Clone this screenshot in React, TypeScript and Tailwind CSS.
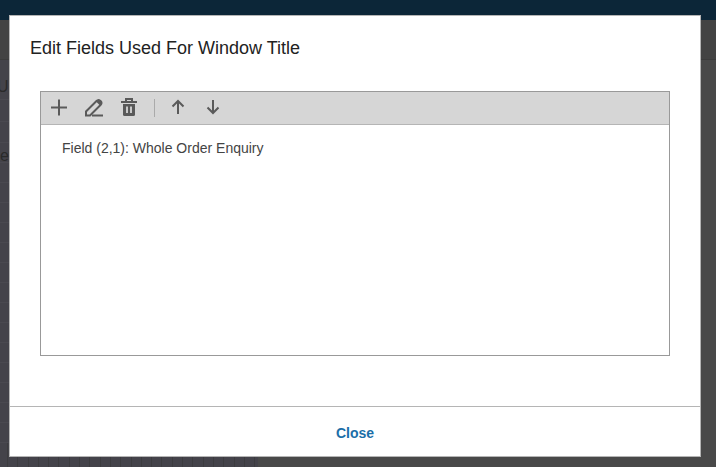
const FONT = "font-['Liberation_Sans',Arial,sans-serif]";

const ToolbarIcon = ({ children }: { children: React.ReactNode }) => (
  <svg width="24" height="24" viewBox="0 0 24 24" fill="none" stroke="#5a5a5a" strokeWidth="2" className="shrink-0">
    {children}
  </svg>
);

const plainRows = Array.from({ length: 14 }, (_, i) => i);
const calendarCells = Array.from({ length: 25 }, (_, i) => i);

const App = () => {
  return (
    <div className={`relative flex h-[467px] w-[716px] flex-col overflow-hidden bg-[#494949] ${FONT}`}>
      {/* page behind the dialog */}
      <div className="h-5 shrink-0 bg-[#0c2638]" />
      <div className="h-10 shrink-0 border-b border-[#3c3c3c] bg-[#434343]" />
      <div className="flex w-[258px] flex-1 flex-col overflow-hidden bg-[#44434a] text-base text-[#2a2a2a]">
        <div className="h-10 shrink-0 border-b border-[#4a4950] pt-[17px] leading-[20px]">
          <span className="-ml-[3px] block">US</span>
        </div>
        <div className="h-[22px] shrink-0 border-b border-[#4a4950]" />
        <div className="h-[21px] shrink-0 border-b border-[#4a4950]" />
        <div className="h-5 shrink-0 border-b border-[#4a4950] leading-[26px]">ef</div>
        {plainRows.map((row) => (
          <div key={row} className="h-5 shrink-0 border-b border-[#4a4950]" />
        ))}
        <div className="flex min-h-0 flex-1 pl-[7px]">
          {calendarCells.map((cell) => (
            <div key={cell} className="w-[10.3px] shrink-0 border-l border-[#3c3c3f]" />
          ))}
        </div>
      </div>

      {/* dialog */}
      <div className="absolute left-[9px] top-[15px] flex h-[442px] w-[692px] flex-col border border-[#b5b5b5] bg-white">
        <h1 className="pl-5 pt-[22px] text-lg leading-[21px] text-[#222]">Edit Fields Used For Window Title</h1>

        <div className="mx-[30px] mt-8 flex h-[265px] flex-col border border-[#999]">
          <div className="flex h-[33px] shrink-0 items-center border-b border-[#b5b5b5] bg-[#d6d6d6] pl-[6px]">
            <ToolbarIcon>
              <path d="M12 3.5v16M4 11.5h16" />
            </ToolbarIcon>
            <div className="ml-[11px]">
              <ToolbarIcon>
                <path d="M4 19.5v-4L14.5 5a2.8 2.8 0 0 1 4 4L8 19.5z" />
                <path d="M14 5.5l4.5 4.500 1-2.500-.5-3-2.500-1.500z" fill="#5a5a5a" stroke="none" />
                <path d="M10 19.500h11" />
              </ToolbarIcon>
            </div>
            <div className="ml-[11px]">
              <ToolbarIcon>
                <path d="M4 6h16M9 5.500V3h6v2.500" />
                <path d="M6 8h12v10.500a1.500 1.500 0 0 1-1.500 1.500h-9A1.500 1.500 0 0 1 6 18.500z" fill="#5a5a5a" stroke="none" />
                <path d="M10 10.500v6.500M14 10.500v6.500" stroke="#d6d6d6" strokeWidth="1.800" />
              </ToolbarIcon>
            </div>
            <div className="ml-[13px] h-[18px] w-px bg-[#aaa]" />
            <div className="ml-[11px]">
              <ToolbarIcon>
                <path d="M12 18V5M6.500 10.500 12 5l5.500 5.500" />
              </ToolbarIcon>
            </div>
            <div className="ml-[11px]">
              <ToolbarIcon>
                <path d="M12 4v13M6.500 11.500 12 17l5.500-5.500" />
              </ToolbarIcon>
            </div>
          </div>
          <div className="pl-[21px] pt-[13px] text-sm leading-[20px] text-[#444]">Field (2,1): Whole Order Enquiry</div>
        </div>

        <div className="mt-[50px] flex flex-1 items-center justify-center border-t border-[#b5b5b5] pt-[3px]">
          <button className="text-sm font-bold text-[#1b6ea8]">Close</button>
        </div>
      </div>
    </div>
  );
};

export default App;
